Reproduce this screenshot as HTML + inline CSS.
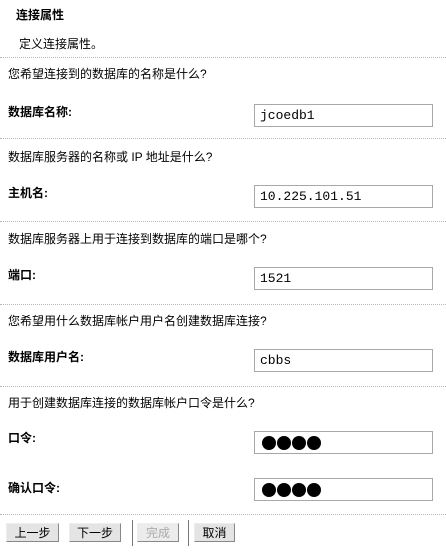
<!DOCTYPE html>
<html><head><meta charset="utf-8"><style>
body{margin:0;width:446px;height:552px;background:#fff;position:relative;overflow:hidden;font-family:"Liberation Sans","Noto Sans CJK SC",sans-serif;font-size:12px;color:#000}
.a{position:absolute;white-space:nowrap;line-height:14px}
.b{font-weight:bold}
.hr{position:absolute;left:0;width:446px;border-top:1px dotted #b8b8b8;height:0}
.in{position:absolute;left:254px;border:1px solid #a8a8a8;font-family:"Liberation Mono",monospace;font-size:13px;line-height:21px;padding-left:5px;box-sizing:border-box;width:179px;height:23px}
.d{position:absolute;top:4px;width:14px;height:14px;border-radius:50%;background:#000}
.btn{position:absolute;top:523px;height:19px;border:1px solid #999;border-color:#eee #888 #888 #eee;background:#e4e4e4;text-align:center;line-height:19px;box-sizing:border-box;font-size:12px}
.sep{position:absolute;top:520px;height:26px;width:1px;background:#777}
</style></head><body>
<div class="a b" style="left:16px;top:8px">连接属性</div>
<div class="a" style="left:19px;top:37px">定义连接属性。</div>
<div class="hr" style="top:57px"></div>
<div class="a" style="left:8px;top:67px">您希望连接到的数据库的名称是什么?</div>
<div class="a b" style="left:8px;top:105px">数据库名称:</div>
<div class="in" style="top:104px">jcoedb1</div>
<div class="hr" style="top:138px"></div>
<div class="a" style="left:8px;top:150px">数据库服务器的名称或 IP 地址是什么?</div>
<div class="a b" style="left:8px;top:186px">主机名:</div>
<div class="in" style="top:185px">10.225.101.51</div>
<div class="hr" style="top:221px"></div>
<div class="a" style="left:8px;top:232px">数据库服务器上用于连接到数据库的端口是哪个?</div>
<div class="a b" style="left:8px;top:268px">端口:</div>
<div class="in" style="top:267px">1521</div>
<div class="hr" style="top:304px"></div>
<div class="a" style="left:8px;top:314px">您希望用什么数据库帐户用户名创建数据库连接?</div>
<div class="a b" style="left:8px;top:350px">数据库用户名:</div>
<div class="in" style="top:349px">cbbs</div>
<div class="hr" style="top:386px"></div>
<div class="a" style="left:8px;top:396px">用于创建数据库连接的数据库帐户口令是什么?</div>
<div class="a b" style="left:8px;top:431px">口令:</div>
<div class="in" style="top:431px"><i class="d" style="left:7px"></i><i class="d" style="left:22px"></i><i class="d" style="left:37px"></i><i class="d" style="left:52px"></i></div>
<div class="a b" style="left:8px;top:481px">确认口令:</div>
<div class="in" style="top:478px"><i class="d" style="left:7px"></i><i class="d" style="left:22px"></i><i class="d" style="left:37px"></i><i class="d" style="left:52px"></i></div>
<div class="hr" style="top:514px"></div>
<div class="btn" style="left:6px;width:53px">上一步</div>
<div class="btn" style="left:69px;width:52px">下一步</div>
<div class="sep" style="left:132px"></div>
<div class="btn" style="left:137px;width:42px;color:#aaa;background:#ececec">完成</div>
<div class="sep" style="left:188px"></div>
<div class="btn" style="left:194px;width:41px">取消</div>
</body></html>
